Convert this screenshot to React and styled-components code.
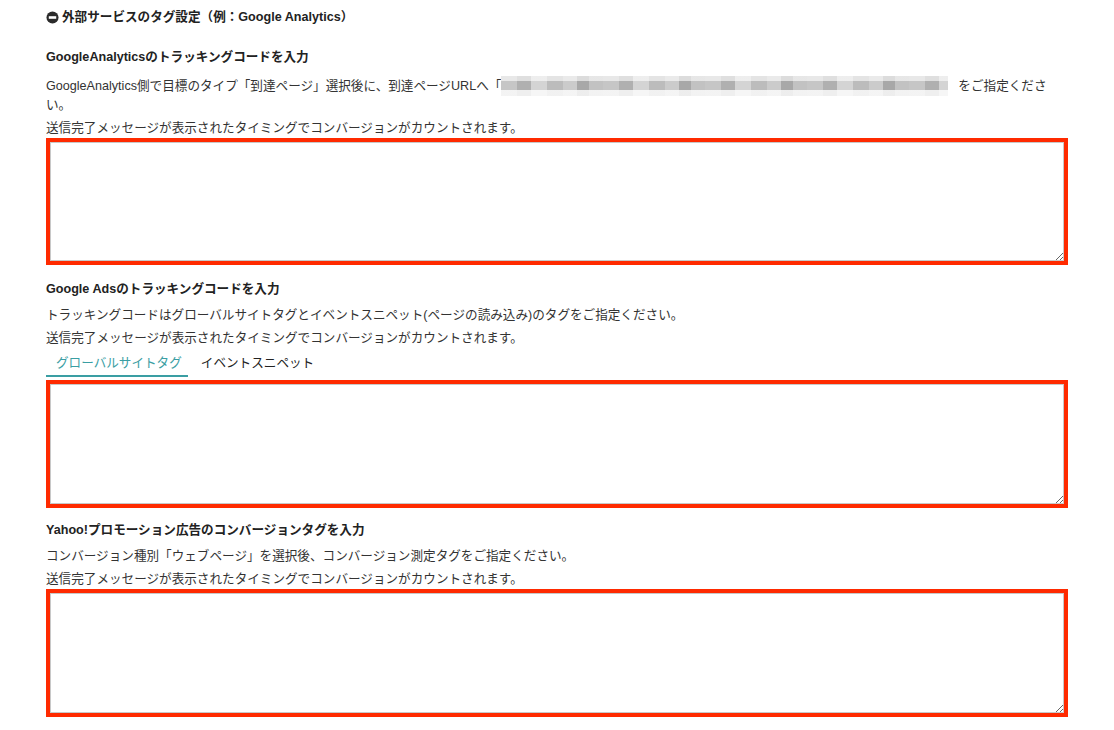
import React, { useState } from "react";
import styled, { createGlobalStyle } from "styled-components";

const GlobalStyle = createGlobalStyle`
  body {
    margin: 0;
    background: #ffffff;
    font-family: "Liberation Sans", "Noto Sans CJK JP", sans-serif;
    color: #333333;
  }
`;

const Page = styled.div`
  width: 1022px;
  padding: 9px 0 10px 46px;
`;

const Heading = styled.h2`
  display: flex;
  align-items: center;
  gap: 3px;
  margin: 0 0 23px;
  font-size: 12.6px;
  line-height: 16px;
  font-weight: bold;
  color: #222;
`;

const Section = styled.section`
  margin-bottom: ${(p) => p.$space || 13}px;
`;

const Title = styled.h3`
  margin: 0 0 ${(p) => p.$gap || 8}px;
  font-size: 12.6px;
  line-height: 18px;
  font-weight: bold;
  color: #222;
`;

const Note = styled.p`
  margin: 0 0 ${(p) => (p.$last ? 0 : 4)}px;
  font-size: 12.6px;
  line-height: 19px;
`;

const Blur = styled.span`
  display: inline-block;
  vertical-align: top;
  width: 447px;
  height: 20px;
  margin: -1px 10px -1px 0;
  background:
    linear-gradient(to bottom, rgba(255,255,255,0.6) 0 24%, transparent 24% 72%, rgba(255,255,255,0.8) 72%),
    repeating-linear-gradient(
      to right,
      #c6c6c6 0 16px,
      #b0b0b0 16px 30px,
      #d4d4d4 30px 46px,
      #bcbcbc 46px 62px,
      #cbcbcb 62px 76px,
      #a8a8a8 76px 88px,
      #c2c2c2 88px 102px
    );
`;

const Area = styled.textarea`
  display: block;
  box-sizing: border-box;
  width: 1022px;
  height: ${(p) => p.$h || 128}px;
  margin: 0;
  border: 4px solid #ff2a00;
  box-shadow: inset 0 0 0 1px #c8c8c8;
  padding: 4px 6px;
  font-family: inherit;
  font-size: 12px;
  outline: none;
`;

const Tabs = styled.div`
  display: flex;
  height: 25px;
  margin: 0 0 3px;
`;

const Tab = styled.button`
  box-sizing: border-box;
  height: 25px;
  border: none;
  background: none;
  padding: ${(p) => (p.$active ? "0 6px 0 10px" : "0 12px 0 13px")};
  font-family: inherit;
  font-size: 12.6px;
  line-height: 23px;
  color: ${(p) => (p.$active ? "#3a9ea3" : "#222")};
  border-bottom: 2px solid ${(p) => (p.$active ? "#3a9ea3" : "transparent")};
  cursor: pointer;
`;

const MinusIcon = () => (
  <svg width="13" height="13" viewBox="0 0 14 14">
    <circle cx="7" cy="7" r="6.5" fill="#2b2b2b" />
    <rect x="3" y="5.6" width="8" height="2.8" fill="#fff" />
  </svg>
);

const COUNT = "送信完了メッセージが表示されたタイミングでコンバージョンがカウントされます。";

export default function App() {
  const [tab, setTab] = useState(0);

  return (
    <Page>
      <GlobalStyle />
      <Heading>
        <MinusIcon />
        外部サービスのタグ設定（例：Google Analytics）
      </Heading>

      <Section $space={15}>
        <Title $gap={11}>GoogleAnalyticsのトラッキングコードを入力</Title>
        <Note>
          GoogleAnalytics側で目標のタイプ「到達ページ」選択後に、到達ページURLへ「
          <Blur />
          をご指定くださ
          <br />
          い。
        </Note>
        <Note $last>{COUNT}</Note>
        <Area $h={127} />
      </Section>

      <Section>
        <Title>Google Adsのトラッキングコードを入力</Title>
        <Note>トラッキングコードはグローバルサイトタグとイベントスニペット(ページの読み込み)のタグをご指定ください。</Note>
        <Note>{COUNT}</Note>
        <Tabs>
          <Tab $active={tab === 0} onClick={() => setTab(0)}>グローバルサイトタグ</Tab>
          <Tab $active={tab === 1} onClick={() => setTab(1)}>イベントスニペット</Tab>
        </Tabs>
        <Area />
      </Section>

      <Section>
        <Title>Yahoo!プロモーション広告のコンバージョンタグを入力</Title>
        <Note>コンバージョン種別「ウェブページ」を選択後、コンバージョン測定タグをご指定ください。</Note>
        <Note $last>{COUNT}</Note>
        <Area />
      </Section>
    </Page>
  );
}
